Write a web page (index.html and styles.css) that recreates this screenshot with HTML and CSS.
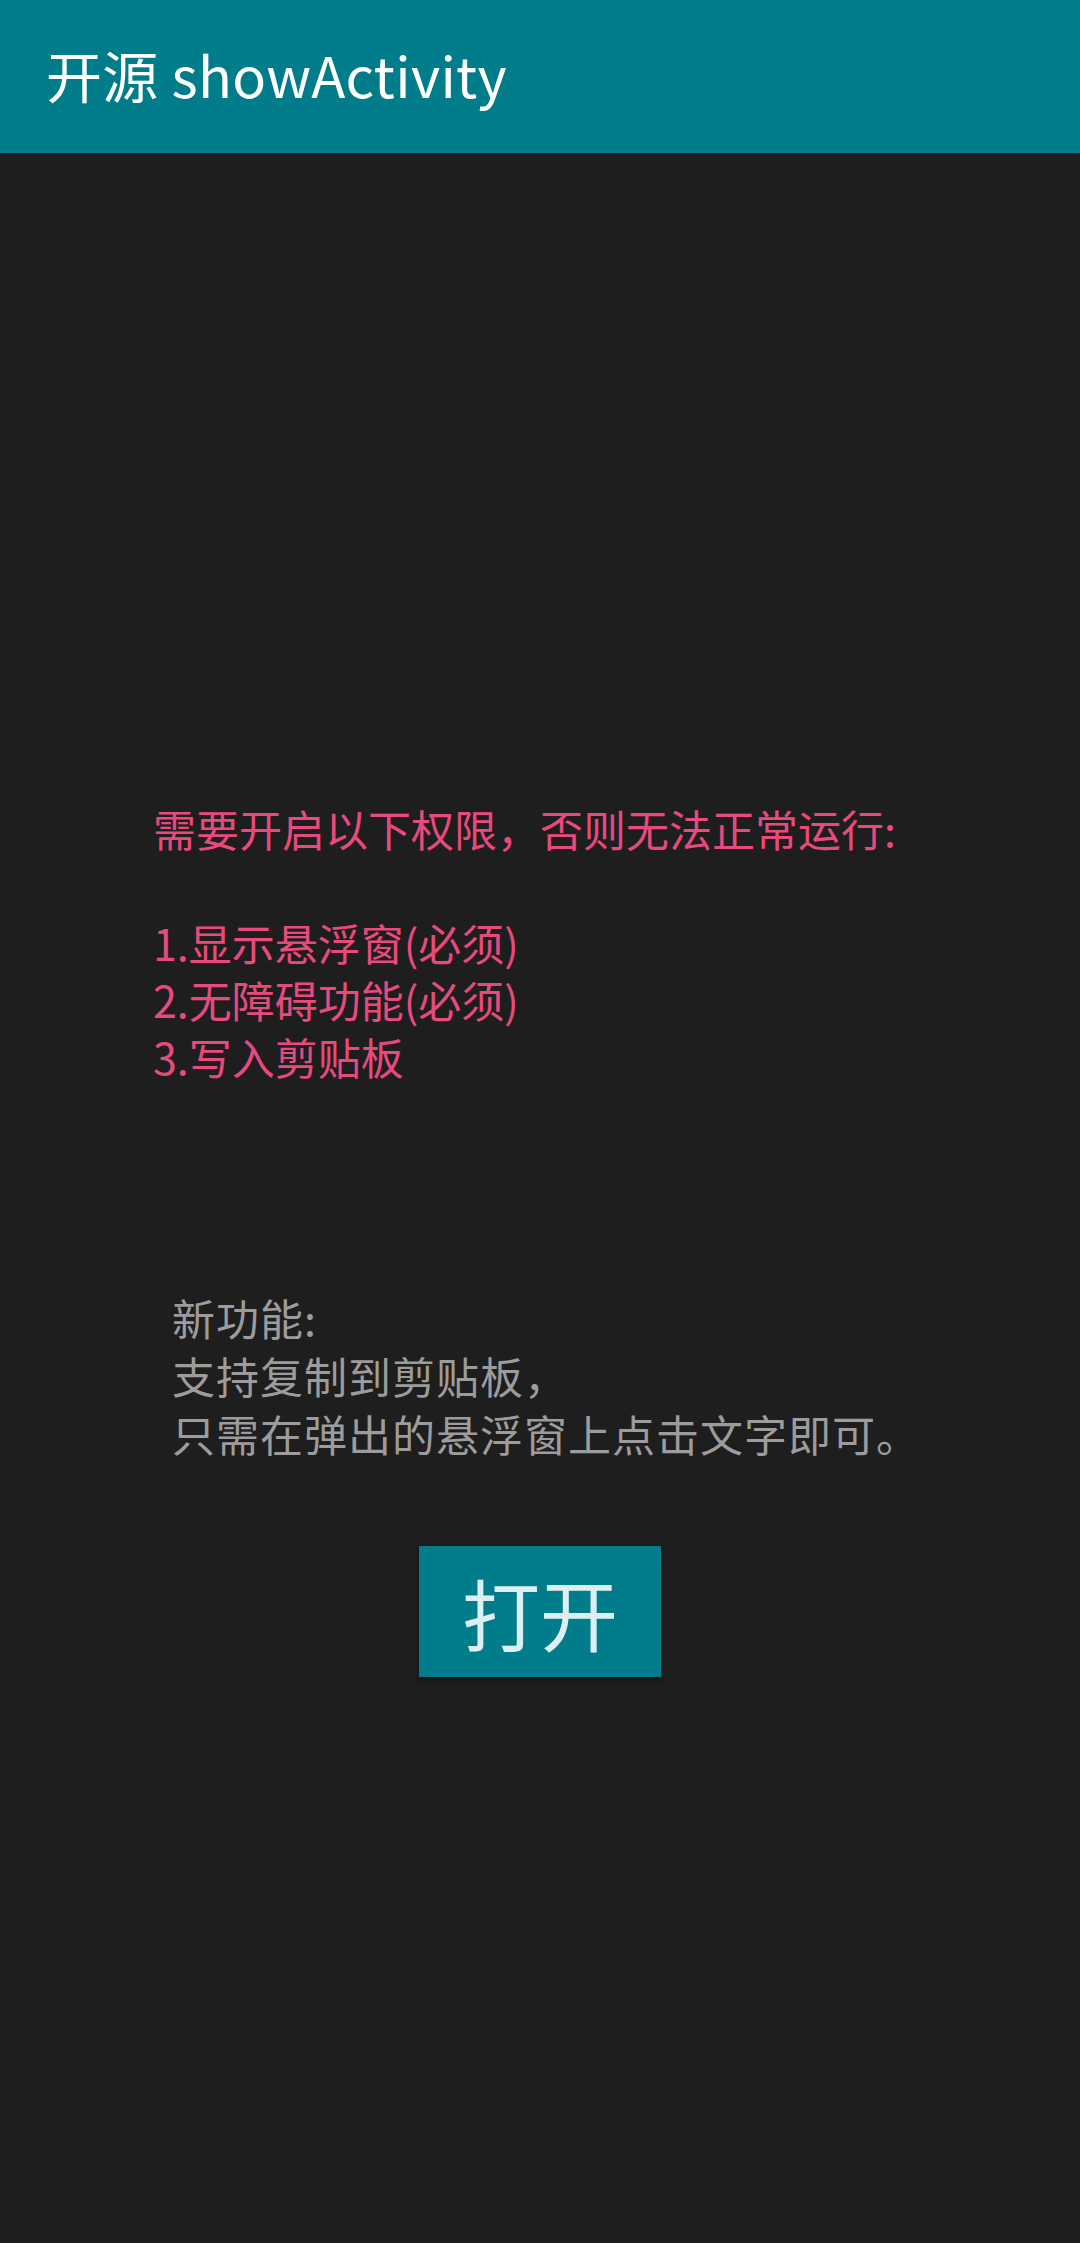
FILE: index.html
```html
<!DOCTYPE html>
<html lang="zh-CN">
<head>
<meta charset="utf-8">
<link rel="stylesheet" href="styles.css">
</head>
<body>
<header class="appbar"><h1 class="title">开源 showActivity</h1></header>
<main class="content">
  <div class="perm">
    <p>需要开启以下权限，否则无法正常运行:</p>
    <p class="blank">&nbsp;</p>
    <p>1.显示悬浮窗(必须)</p>
    <p>2.无障碍功能(必须)</p>
    <p>3.写入剪贴板</p>
  </div>
  <div class="news">
    <p>新功能:</p>
    <p>支持复制到剪贴板，</p>
    <p>只需在弹出的悬浮窗上点击文字即可。</p>
  </div>
  <div class="btnrow"><button class="open">打开</button></div>
</main>
</body>
</html>
```
FILE: styles.css
```css
html, body {
  margin: 0;
  padding: 0;
  background: #1e1e1e;
  height: 100%;
}
body {
  font-family: "Noto Sans CJK SC", "Noto Sans", sans-serif;
}
.appbar {
  height: 153px;
  background: #017c8a;
  display: flex;
  align-items: center;
  padding-left: 46px;
  box-sizing: border-box;
}
.title {
  margin: 0;
  font-weight: 400;
  font-size: 56px;
  color: #ffffff;
  letter-spacing: 0.3px;
  position: relative;
  top: -3px;
}
.content {
  display: flex;
  flex-direction: column;
}
.content p {
  margin: 0;
}
.perm {
  margin-top: 647px;
  padding-left: 153px;
  font-size: 43px;
  line-height: 57px;
  color: #e94a7e;
}
.news {
  margin-top: 203px;
  padding-left: 172px;
  font-size: 43px;
  line-height: 58px;
  letter-spacing: 1px;
  color: #9c9c9c;
}
.btnrow {
  display: flex;
  justify-content: center;
  margin-top: 84px;
}
.open {
  width: 242px;
  height: 131px;
  border: none;
  background: #017c8a;
  color: #dcf0f3;
  font-family: "Noto Sans CJK SC", sans-serif;
  font-size: 78px;
  padding: 0;
  box-shadow: 0 3px 5px rgba(0,0,0,0.45);
}
```
